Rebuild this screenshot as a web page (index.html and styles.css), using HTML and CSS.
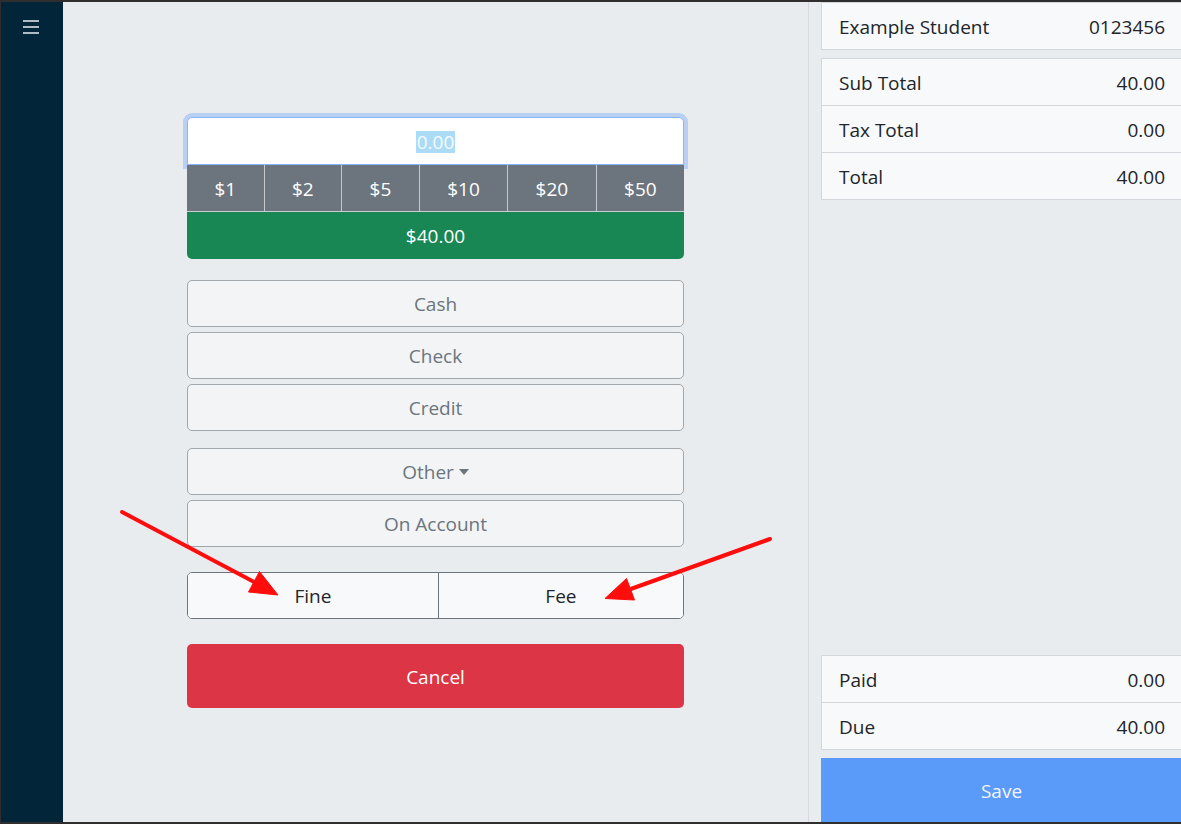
FILE: index.html
```html
<!DOCTYPE html>
<html lang="en">
<head>
<meta charset="utf-8">
<title>Payment</title>
<link rel="stylesheet" href="styles.css">
</head>
<body>
<div class="frame">
  <nav class="sidebar">
    <button class="menu-btn" aria-label="Menu">
      <svg width="16" height="14" viewBox="0 0 16 14"><path d="M0 1h16M0 7h16M0 13h16" stroke="#e9eef2" stroke-width="1.6"/></svg>
    </button>
  </nav>

  <main class="pos">
    <div class="tender">
      <div class="amount-entry">
        <div class="amount-input"><span class="amount-sel">0.00</span></div>
        <div class="quick-cash">
          <button class="qc">$1</button>
          <button class="qc">$2</button>
          <button class="qc">$5</button>
          <button class="qc">$10</button>
          <button class="qc">$20</button>
          <button class="qc">$50</button>
        </div>
        <button class="btn-exact">$40.00</button>
      </div>

      <div class="method-list">
        <button class="method">Cash</button>
        <button class="method">Check</button>
        <button class="method">Credit</button>
      </div>

      <div class="method-list more">
        <button class="method">Other<span class="caret"></span></button>
        <button class="method">On Account</button>
      </div>

      <div class="charge-type">
        <button class="charge">Fine</button>
        <button class="charge">Fee</button>
      </div>

      <button class="btn-cancel">Cancel</button>
    </div>
  </main>

  <aside class="summary">
    <div class="card">
      <div class="row"><span>Example Student</span><span>0123456</span></div>
    </div>
    <div class="card totals">
      <div class="row"><span>Sub Total</span><span>40.00</span></div>
      <div class="row"><span>Tax Total</span><span>0.00</span></div>
      <div class="row"><span>Total</span><span>40.00</span></div>
    </div>
    <div class="spacer"></div>
    <div class="card">
      <div class="row"><span>Paid</span><span>0.00</span></div>
      <div class="row"><span>Due</span><span>40.00</span></div>
    </div>
    <button class="btn-save" disabled>Save</button>
  </aside>
</div>

<svg class="callouts" width="1181" height="824" viewBox="0 0 1181 824">
  <g fill="#ff0d0d" stroke="#ff0d0d">
    <line x1="122" y1="512" x2="256" y2="583" stroke-width="4" stroke-linecap="round"/>
    <polygon points="278,595 248.5,592 259.5,571.5" stroke-width="1" stroke-linejoin="round"/>
    <line x1="770" y1="539" x2="628" y2="590" stroke-width="4" stroke-linecap="round"/>
    <polygon points="605,598.5 626.5,578.5 634.5,600" stroke-width="1" stroke-linejoin="round"/>
  </g>
</svg>
</body>
</html>
```

FILE: styles.css
```css
* { box-sizing: border-box; }

html, body {
  margin: 0;
  padding: 0;
  width: 1181px;
  height: 824px;
  overflow: hidden;
  background: #2e2e2e;
}

body {
  font-family: "Open Sans", "Noto Sans", sans-serif;
  font-size: 19px;
  color: #212529;
}

button {
  font: inherit;
  margin: 0;
  cursor: pointer;
}

.frame {
  display: flex;
  height: 824px;
  border-top: 2px solid #2e2e2e;
  border-bottom: 2px solid #2e2e2e;
  border-left: 1px solid #2e2e2e;
}

/* left navigation rail */
.sidebar {
  width: 62px;
  flex: none;
  background: #02253a;
  padding: 18px 0 0 22px;
}

.menu-btn {
  display: block;
  background: none;
  border: 0;
  padding: 0;
  line-height: 0;
}

/* payment entry area */
.pos {
  flex: 1;
  background: #e9ecef;
  border-right: 1px solid #d8dce0;
}

.tender {
  width: 497px;
  margin: 0 auto;
  padding-top: 115px;
  display: flex;
  flex-direction: column;
}

.amount-entry {
  display: flex;
  flex-direction: column;
}

.amount-input {
  height: 48px;
  background: #fff;
  border: 1px solid #86b7fe;
  border-radius: 5px 5px 0 0;
  box-shadow: 0 0 0 4px rgba(13, 110, 253, 0.22);
  display: flex;
  align-items: center;
  justify-content: center;
  padding-top: 1px;
}

.amount-sel {
  background: #acdcf5;
  color: #f3faff;
  line-height: 22px;
  padding: 0 1px;
}

.quick-cash {
  display: flex;
  height: 47px;
  background: #6c757d;
  border-bottom: 1px solid #c9cdd1;
}

.qc {
  flex: 1 1 auto;
  background: #6c757d;
  color: #fff;
  border: 0;
  border-left: 1px solid #c4c8cc;
  padding: 1px 12px 0;
}

.qc:first-child { border-left: 0; }

.btn-exact {
  height: 47px;
  background: #198754;
  color: #fff;
  border: 0;
  border-radius: 0 0 5px 5px;
  padding-top: 2px;
}

.method-list {
  display: flex;
  flex-direction: column;
  gap: 5px;
  margin-top: 21px;
}

.method-list.more { margin-top: 17px; }

.method {
  height: 47px;
  background: #f2f4f6;
  color: #6c757d;
  border: 1px solid #a2a7ac;
  border-radius: 5px;
  padding-top: 2px;
}

.caret {
  display: inline-block;
  margin-left: 5px;
  vertical-align: 4px;
  border-top: 6px solid #6c757d;
  border-left: 5px solid transparent;
  border-right: 5px solid transparent;
}

.charge-type {
  display: flex;
  margin-top: 25px;
  height: 47px;
  border: 1px solid #6c757d;
  border-radius: 5px;
  overflow: hidden;
}

.charge {
  flex: 1 1 auto;
  background: #f8f9fa;
  color: #212529;
  border: 0;
  padding-top: 2px;
}

.charge + .charge { border-left: 1px solid #6c757d; }

.btn-cancel {
  margin-top: 25px;
  height: 64px;
  background: #dc3545;
  color: #fff;
  border: 0;
  border-radius: 5px;
  padding-top: 2px;
}

/* order summary */
.summary {
  width: 372px;
  flex: none;
  background: #e9ecef;
  padding-left: 12px;
  display: flex;
  flex-direction: column;
  gap: 8px;
  overflow: hidden;
}

.card {
  background: #f8f9fa;
  border: 1px solid #d3d7db;
  margin-right: -1px;
}

.row {
  height: 47px;
  display: flex;
  align-items: center;
  justify-content: space-between;
  padding: 2px 16px 0 17px;
  border-top: 1px solid #d3d7db;
}

.row:first-child {
  height: 46px;
  border-top: 0;
}

.spacer { flex: 1; }

.btn-save {
  height: 64px;
  flex: none;
  background: #5a9af8;
  color: #f1f6fe;
  border: 0;
  margin-right: -1px;
  padding-top: 2px;
}

/* annotation arrows drawn over the form */
.callouts {
  position: fixed;
  left: 0;
  top: 0;
  pointer-events: none;
}
```
